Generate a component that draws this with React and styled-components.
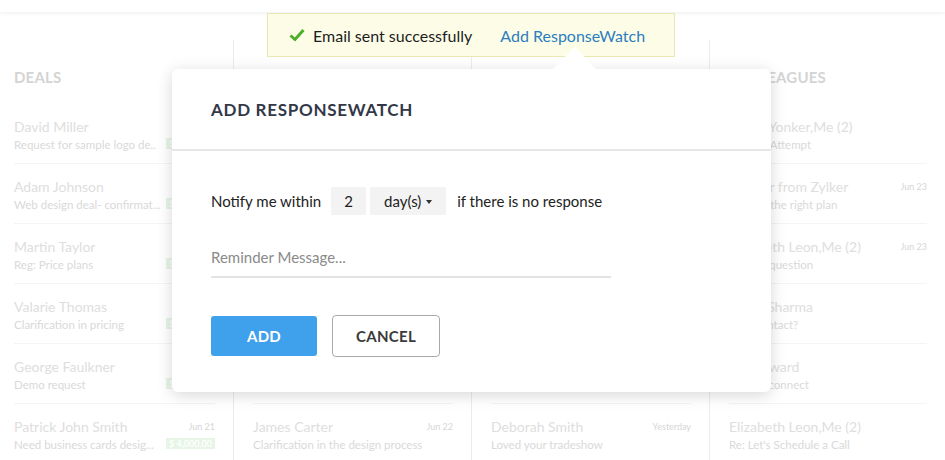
import React from 'react';
import styled, { createGlobalStyle } from 'styled-components';

const GlobalStyle = createGlobalStyle`
    html, body {
        margin: 0;
        padding: 0;
        background: #ffffff;
        font-family: Lato, "Open Sans", sans-serif;
        overflow: hidden;
    }
`;

const columns = [
    {
        title: 'DEALS',
        rows: [
            { name: 'David Miller', subject: 'Request for sample logo de..', tag: '$ 1,200.00' },
            { name: 'Adam Johnson', subject: 'Web design deal- confirmat...', tag: '$ 2,500.00' },
            { name: 'Martin Taylor', subject: 'Reg: Price plans', tag: '$ 3,000.00' },
            { name: 'Valarie Thomas', subject: 'Clarification in pricing', tag: '$ 5,400.00' },
            { name: 'George Faulkner', subject: 'Demo request', tag: '$ 1,800.00' },
            { name: 'Patrick John Smith', subject: 'Need business cards desig...', date: 'Jun 21', tag: '$ 4,000.00' },
        ],
    },
    {
        title: 'CUSTOMERS',
        rows: [
            { name: 'Linda Brown', subject: 'Invoice for May', date: 'Jun 24' },
            { name: 'Kevin Parker', subject: 'Follow up on the order', date: 'Jun 24' },
            { name: 'Sarah Wilson', subject: 'Feedback on the mockups', date: 'Jun 23' },
            { name: 'Tom Baker', subject: 'Meeting notes', date: 'Jun 23' },
            { name: 'Olivia Green', subject: 'Renewal reminder', date: 'Jun 22' },
            { name: 'James Carter', subject: 'Clarification in the design process', date: 'Jun 22' },
        ],
    },
    {
        title: 'VENDORS',
        rows: [
            { name: 'Paul Walker', subject: 'Shipping schedule', date: 'Today' },
            { name: 'Nina Adams', subject: 'Quote for printing', date: 'Today' },
            { name: 'Chris Evans', subject: 'Updated price list', date: 'Today' },
            { name: 'Monica Lee', subject: 'Booth confirmation', date: 'Yesterday' },
            { name: 'Henry Ford', subject: 'Catalogue request', date: 'Yesterday' },
            { name: 'Deborah Smith', subject: 'Loved your tradeshow', date: 'Yesterday' },
        ],
    },
    {
        title: 'COLLEAGUES',
        rows: [
            { name: 'Helen Yonker,Me (2)', subject: 'Re: 2nd Attempt' },
            { name: 'Partner from Zylker', subject: 'Choose the right plan', date: 'Jun 23' },
            { name: 'Elizabeth Leon,Me (2)', subject: 'A quick question', date: 'Jun 23' },
            { name: 'Rahul Sharma', subject: 'New contact?' },
            { name: 'Jim Edward', subject: 'Nice to connect' },
            { name: 'Elizabeth Leon,Me (2)', subject: "Re: Let's Schedule a Call" },
        ],
    },
];

const CheckIcon = () => (
    <svg width="16" height="14" viewBox="0 0 16 14">
        <path d="M1.5 7.5 L6 11.5 L14.5 2" fill="none" stroke="#4caf28" strokeWidth="3" />
    </svg>
);

const App = () => {
    return (
        <Page>
            <GlobalStyle />
            <TopBar />
            <Board>
                {columns.map((col, i) => (
                    <Column key={col.title} first={i === 0}>
                        <ColumnTitle>{col.title}</ColumnTitle>
                        {col.rows.map((row, j) => (
                            <Row key={j} last={j === col.rows.length - 1}>
                                <RowMain>
                                    <Name>{row.name}</Name>
                                    <Subject>{row.subject}</Subject>
                                </RowMain>
                                <RowSide>
                                    <DateText>{row.date || ''}</DateText>
                                    {row.tag && <Tag>{row.tag}</Tag>}
                                </RowSide>
                            </Row>
                        ))}
                    </Column>
                ))}
            </Board>

            <Toast>
                <CheckIcon />
                <ToastText>Email sent successfully</ToastText>
                <ToastLink>Add ResponseWatch</ToastLink>
            </Toast>

            <Modal>
                <Notch />
                <ModalHeader>
                    <ModalTitle>ADD RESPONSEWATCH</ModalTitle>
                </ModalHeader>
                <ModalBody>
                    <NotifyRow>
                        <span>Notify me within</span>
                        <NumberBox>2</NumberBox>
                        <SelectBox>
                            <span>day(s)</span>
                            <Caret />
                        </SelectBox>
                        <Trailing>if there is no response</Trailing>
                    </NotifyRow>
                    <MessageInput placeholder="Reminder Message..." />
                    <Actions>
                        <PrimaryButton>ADD</PrimaryButton>
                        <SecondaryButton>CANCEL</SecondaryButton>
                    </Actions>
                </ModalBody>
            </Modal>
        </Page>
    );
};

const Page = styled.div`
    position: relative;
    width: 945px;
    height: 460px;
    overflow: hidden;
    background: #fff;
`;

const TopBar = styled.div`
    height: 12px;
    background: #fff;
    box-shadow: 0 1px 5px rgba(0, 0, 0, 0.07);
    position: relative;
    z-index: 1;
`;

const Board = styled.div`
    display: grid;
    grid-template-columns: 233px 238px 238px 1fr;
    padding-top: 28px;
`;

const Column = styled.div`
    border-left: ${props => props.first ? 'none' : '1px solid #ececec'};
    padding: 0 18px 0 ${props => props.first ? '14px' : '19px'};
    height: 420px;
    min-width: 0;
`;

const ColumnTitle = styled.div`
    margin-top: 29px;
    margin-bottom: 19px;
    font-size: 15px;
    line-height: 16px;
    font-weight: 700;
    color: #d4d4d4;
    letter-spacing: 0.2px;
`;

const Row = styled.div`
    display: flex;
    justify-content: space-between;
    height: 60px;
    box-sizing: border-box;
    padding-top: 14px;
    border-bottom: ${props => props.last ? 'none' : '1px solid #f4f4f4'};
`;

const RowMain = styled.div`
    display: flex;
    flex-direction: column;
    gap: 2px;
    min-width: 0;
    white-space: nowrap;
`;

const Name = styled.div`
    font-size: 14px;
    line-height: 17px;
    color: #dedede;
`;

const Subject = styled.div`
    font-size: 11.5px;
    line-height: 16px;
    color: #d9d9d9;
`;

const RowSide = styled.div`
    display: flex;
    flex-direction: column;
    align-items: flex-end;
    gap: 5px;
    padding-top: 3px;
    flex-shrink: 0;
    margin-left: 3px;
`;

const DateText = styled.div`
    font-size: 9px;
    line-height: 12px;
    color: #d6d6d6;
    min-height: 12px;
    white-space: nowrap;
`;

const Tag = styled.div`
    background: #e6f5e6;
    color: #fff;
    font-size: 9px;
    line-height: 11px;
    padding: 0 3px;
    font-weight: 700;
    white-space: nowrap;
`;

const Toast = styled.div`
    position: absolute;
    left: 267px;
    top: 13px;
    width: 408px;
    height: 44px;
    box-sizing: border-box;
    background: #fdfde7;
    border: 1px solid #e9e8b5;
    display: flex;
    align-items: center;
    padding-left: 21px;
    font-size: 16px;
    z-index: 2;
`;

const ToastText = styled.span`
    color: #1e1e1e;
    margin-left: 8px;
`;

const ToastLink = styled.span`
    color: #2c7dc0;
    margin-left: 28px;
`;

const Modal = styled.div`
    position: absolute;
    left: 172px;
    top: 69px;
    width: 599px;
    height: 323px;
    background: #fff;
    border-radius: 6px;
    box-shadow: 0 3px 16px rgba(0, 0, 0, 0.16);
    z-index: 3;
`;

const Notch = styled.div`
    position: absolute;
    left: 381px;
    top: -22px;
    width: 43px;
    height: 22px;
    background: #fff;
    clip-path: polygon(50% 0, 100% 100%, 0 100%);
`;

const ModalHeader = styled.div`
    height: 80px;
    display: flex;
    align-items: center;
    padding-left: 39px;
    border-bottom: 2px solid #e7e7e7;
`;

const ModalTitle = styled.div`
    font-size: 17px;
    font-weight: 700;
    color: #333848;
    letter-spacing: 0.7px;
`;

const ModalBody = styled.div`
    padding: 36px 39px 0;
    display: flex;
    flex-direction: column;
`;

const NotifyRow = styled.div`
    display: flex;
    align-items: center;
    font-size: 15px;
    color: #222;
    height: 28px;
    white-space: nowrap;
`;

const NumberBox = styled.span`
    background: #f3f3f3;
    width: 35px;
    height: 28px;
    display: flex;
    align-items: center;
    justify-content: center;
    margin-left: 10px;
`;

const SelectBox = styled.span`
    background: #f3f3f3;
    width: 76px;
    height: 28px;
    display: flex;
    align-items: center;
    justify-content: center;
    gap: 5px;
    margin-left: 4px;
`;

const Caret = styled.span`
    width: 0;
    height: 0;
    border-left: 3.5px solid transparent;
    border-right: 3.5px solid transparent;
    border-top: 4px solid #333;
    margin-top: 2px;
`;

const Trailing = styled.span`
    margin-left: 11px;
`;

const MessageInput = styled.input`
    margin-top: 27px;
    width: 400px;
    height: 36px;
    box-sizing: border-box;
    border: none;
    border-bottom: 2px solid #e3e3e3;
    padding: 0 0 4px;
    font-family: Lato, "Open Sans", sans-serif;
    font-size: 15px;
    color: #333;
    outline: none;
    &::placeholder {
        color: #8a8a8a;
    }
`;

const Actions = styled.div`
    display: flex;
    align-items: center;
    gap: 15px;
    margin-top: 37px;
`;

const PrimaryButton = styled.button`
    width: 106px;
    height: 40px;
    border: none;
    border-radius: 3px;
    background: #3fa0ec;
    color: #fff;
    font-family: Lato, "Open Sans", sans-serif;
    font-size: 15px;
    font-weight: 700;
    letter-spacing: 0.3px;
`;

const SecondaryButton = styled.button`
    width: 108px;
    height: 42px;
    border: 1px solid #a9a9a9;
    border-radius: 4px;
    background: #fff;
    color: #3a3a3a;
    font-family: Lato, "Open Sans", sans-serif;
    font-size: 15px;
    font-weight: 700;
    letter-spacing: 0.3px;
`;

export default App;
